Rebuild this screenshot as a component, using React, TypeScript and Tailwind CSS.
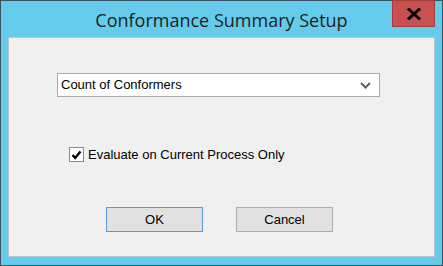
export default function App() {
  return (
    <div className="w-[443px] h-[266px] border border-[#3c5260] bg-[#65cbea] flex flex-col font-['Liberation_Sans',Arial,sans-serif]">
      <div className="relative h-[36px] flex items-center justify-center">
        <span className="font-['Open_Sans',sans-serif] text-[18px] text-[#1e1e1e] leading-none pt-[2px]">
          Conformance Summary Setup
        </span>
        <div className="absolute right-[7px] top-[-1px] w-[43px] h-[27px] bg-[#c75050] border border-[#a33c3c] flex items-center justify-center">
          <svg width="14" height="12" viewBox="0 0 14 12">
            <path d="M2 1.5 L12 10.5 M12 1.5 L2 10.5" stroke="#000" strokeWidth="3" strokeLinecap="square" />
          </svg>
        </div>
      </div>
      <div className="mx-[7px] h-[220px] bg-[#f0f0f0] border border-[#b8c6cd] flex flex-col pt-[35px]">
        <div className="ml-[48px] w-[323px] h-[24px] bg-white border border-[#a9a9a9] flex items-center justify-between pl-[3px] pr-[8px]">
          <span className="text-[13px] text-black">Count of Conformers</span>
          <svg width="11" height="7" viewBox="0 0 11 7">
            <path d="M1 1 L5.5 5.5 L10 1" stroke="#606060" strokeWidth="2" fill="none" />
          </svg>
        </div>
        <div className="ml-[60px] mt-[50px] flex items-center h-[15px]">
          <div className="w-[15px] h-[15px] bg-white border border-[#8a8a8a] flex items-center justify-center">
            <svg width="11" height="10" viewBox="0 0 11 10">
              <path d="M1.5 5 L4.2 8 L9.5 1.5" stroke="#000" strokeWidth="2.3" fill="none" />
            </svg>
          </div>
          <span className="ml-[4px] text-[13px] text-black">Evaluate on Current Process Only</span>
        </div>
        <div className="ml-[97px] mt-[45px] flex gap-[33px]">
          <div className="w-[97px] h-[25px] bg-[#e1e1e1] border border-[#5b9ad8] flex items-center justify-center text-[13px] text-black">
            OK
          </div>
          <div className="w-[97px] h-[25px] bg-[#e1e1e1] border border-[#adadad] flex items-center justify-center text-[13px] text-black">
            Cancel
          </div>
        </div>
      </div>
    </div>
  );
}
